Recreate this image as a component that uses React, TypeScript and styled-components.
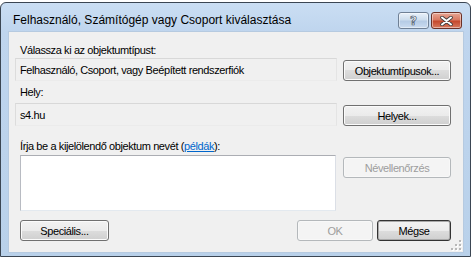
import React from 'react'
import styled, { createGlobalStyle } from 'styled-components'

const GlobalStyle = createGlobalStyle`
  html, body {
    margin: 0;
    padding: 0;
    background: #ffffff;
  }
  body {
    font-family: 'Liberation Sans', Arial, sans-serif;
    font-size: 11px;
    color: #000;
  }
`

const Page = styled.div`
  width: 472px;
  height: 258px;
  padding-top: 2px;
  box-sizing: border-box;
  overflow: hidden;
`

const Window = styled.div`
  width: 471px;
  height: 255px;
  box-sizing: border-box;
  border: 1px solid #3b4653;
  border-radius: 6px 6px 0 0;
  background: linear-gradient(#cadef3, #bfd5ee 28px, #b9d1ea);
  display: flex;
  flex-direction: column;
`

const TitleBar = styled.div`
  height: 28px;
  display: flex;
  align-items: flex-start;
  padding: 0 8px 0 12px;
`

const Title = styled.div`
  flex: 1;
  margin-top: 10px;
  font-size: 12px;
  line-height: 14px;
  color: #000;
  white-space: nowrap;
`

const CaptionButtons = styled.div`
  display: flex;
  gap: 2px;
  margin-top: 9px;
`

const CaptionButton = styled.div<{ $close?: boolean }>`
  width: 31px;
  height: 17px;
  box-sizing: border-box;
  border: 1px solid ${p => (p.$close ? '#6b3127' : '#6f8095')};
  border-radius: 3px;
  display: flex;
  align-items: center;
  justify-content: center;
  background: ${p =>
    p.$close
      ? 'linear-gradient(#e7a695, #d97a63 45%, #c5492d 55%, #d67a5f)'
      : 'linear-gradient(#e9f1fa, #cddded 45%, #b5cbe5 55%, #cbdcf0)'};
  box-shadow: inset 0 0 0 1px rgba(255, 255, 255, 0.45);
`

const HelpGlyph = styled.span`
  font-family: 'DejaVu Sans', sans-serif;
  font-weight: bold;
  font-size: 12px;
  line-height: 12px;
  color: #f3f6fa;
  -webkit-text-stroke: 0.7px #4a5566;
`

const Client = styled.div`
  position: relative;
  flex: 1;
  margin: 0 6px 3px 7px;
  background: #f0f0f0;
  border: 1px solid #b6cae0;
  padding: 12px 0 0 6px;
  display: grid;
  grid-template-columns: 322px 108px;
  column-gap: 6px;
  align-content: start;
  letter-spacing: -0.4px;
`

const Label = styled.div<{ $top: number }>`
  grid-column: 1 / 3;
  margin: ${p => p.$top}px 0 0 5px;
  line-height: 13px;
  height: 13px;
  white-space: nowrap;
`

const Link = styled.span`
  color: #0066cc;
  text-decoration: underline;
`

const ReadOnlyField = styled.div<{ $top: number }>`
  grid-column: 1;
  margin-top: ${p => p.$top}px;
  height: 23px;
  box-sizing: border-box;
  border: 1px solid;
  border-color: #d8d8d8 #e4e4e4 #ebebeb #dcdcdc;
  padding-left: 4px;
  display: flex;
  align-items: center;
  white-space: nowrap;
`

const TextBox = styled.div`
  grid-column: 1;
  margin: 2px 1px 0 5px;
  height: 56px;
  box-sizing: border-box;
  background: #ffffff;
  border: 1px solid;
  border-color: #abadb3 #dbdfe6 #e3e9ef #b8bbc2;
`

const Button = styled.div<{ $width?: number; $disabled?: boolean; $default?: boolean }>`
  width: ${p => (p.$width ? `${p.$width}px` : '100%')};
  height: 21px;
  box-sizing: border-box;
  border: 1px solid ${p => (p.$disabled ? '#b4b8bb' : p.$default ? '#333333' : '#707070')};
  border-radius: 3px;
  display: flex;
  align-items: center;
  justify-content: center;
  color: ${p => (p.$disabled ? '#9d9d9d' : '#000')};
  background: ${p =>
    p.$disabled ? '#f4f4f4' : 'linear-gradient(#f2f2f2, #ebebeb 50%, #dddddd 50%, #cfcfcf)'};
  box-shadow: inset 0 0 0 1px ${p => (p.$disabled ? '#f8f8f8' : p.$default ? '#a9a9a9' : '#fbfbfb')};
  white-space: nowrap;
`

const SideSlot = styled.div<{ $align: string; $top: number }>`
  grid-column: 2;
  align-self: ${p => p.$align};
  margin-top: ${p => p.$top}px;
`

const Footer = styled.div`
  grid-column: 1 / 3;
  margin: 9px 0 0 5px;
  display: flex;
  align-items: center;
`

const Spacer = styled.div`
  flex: 1;
`

const OkGroup = styled.div`
  display: flex;
  gap: 4px;
`

const Grip = styled.svg`
  position: absolute;
  right: 1px;
  bottom: 1px;
`

const CloseIcon = () => (
  <svg width="13" height="10" viewBox="0 0 13 10">
    <path d="M2 1.5 L11 8.5 M11 1.5 L2 8.5" stroke="#3d3d3d" strokeWidth="3.6" strokeLinecap="round" />
    <path d="M2 1.5 L11 8.5 M11 1.5 L2 8.5" stroke="#ffffff" strokeWidth="2" strokeLinecap="round" />
  </svg>
)

const gripDots = [
  [8, 0],
  [4, 4],
  [8, 4],
  [0, 8],
  [4, 8],
  [8, 8],
]

export default function App() {
  return (
    <Page>
      <GlobalStyle />
      <Window>
        <TitleBar>
          <Title>Felhasználó, Számítógép vagy Csoport kiválasztása</Title>
          <CaptionButtons>
            <CaptionButton>
              <HelpGlyph>?</HelpGlyph>
            </CaptionButton>
            <CaptionButton $close>
              <CloseIcon />
            </CaptionButton>
          </CaptionButtons>
        </TitleBar>

        <Client>
          <Label $top={0}>Válassza ki az objektumtípust:</Label>
          <ReadOnlyField $top={1}>Felhasználó, Csoport, vagy Beépített rendszerfiók</ReadOnlyField>
          <SideSlot $align="end" $top={0}>
            <Button>Objektumtípusok...</Button>
          </SideSlot>

          <Label $top={5}>Hely:</Label>
          <ReadOnlyField $top={4}>s4.hu</ReadOnlyField>
          <SideSlot $align="end" $top={0}>
            <Button>Helyek...</Button>
          </SideSlot>

          <Label $top={14}>
            Írja be a kijelölendő objektum nevét (<Link>példák</Link>):
          </Label>
          <TextBox />
          <SideSlot $align="start" $top={4}>
            <Button $disabled>Névellenőrzés</Button>
          </SideSlot>

          <Footer>
            <Button $width={89}>Speciális...</Button>
            <Spacer />
            <OkGroup>
              <Button $width={76} $disabled>OK</Button>
              <Button $width={74} $default>Mégse</Button>
            </OkGroup>
          </Footer>

          <Grip width="11" height="11" viewBox="0 0 11 11">
            {gripDots.map(([x, y]) => (
              <g key={`${x}-${y}`}>
                <rect x={x + 1} y={y + 1} width="2" height="2" fill="#ffffff" />
                <rect x={x} y={y} width="2" height="2" fill="#b8b8b8" />
              </g>
            ))}
          </Grip>
        </Client>
      </Window>
    </Page>
  )
}
